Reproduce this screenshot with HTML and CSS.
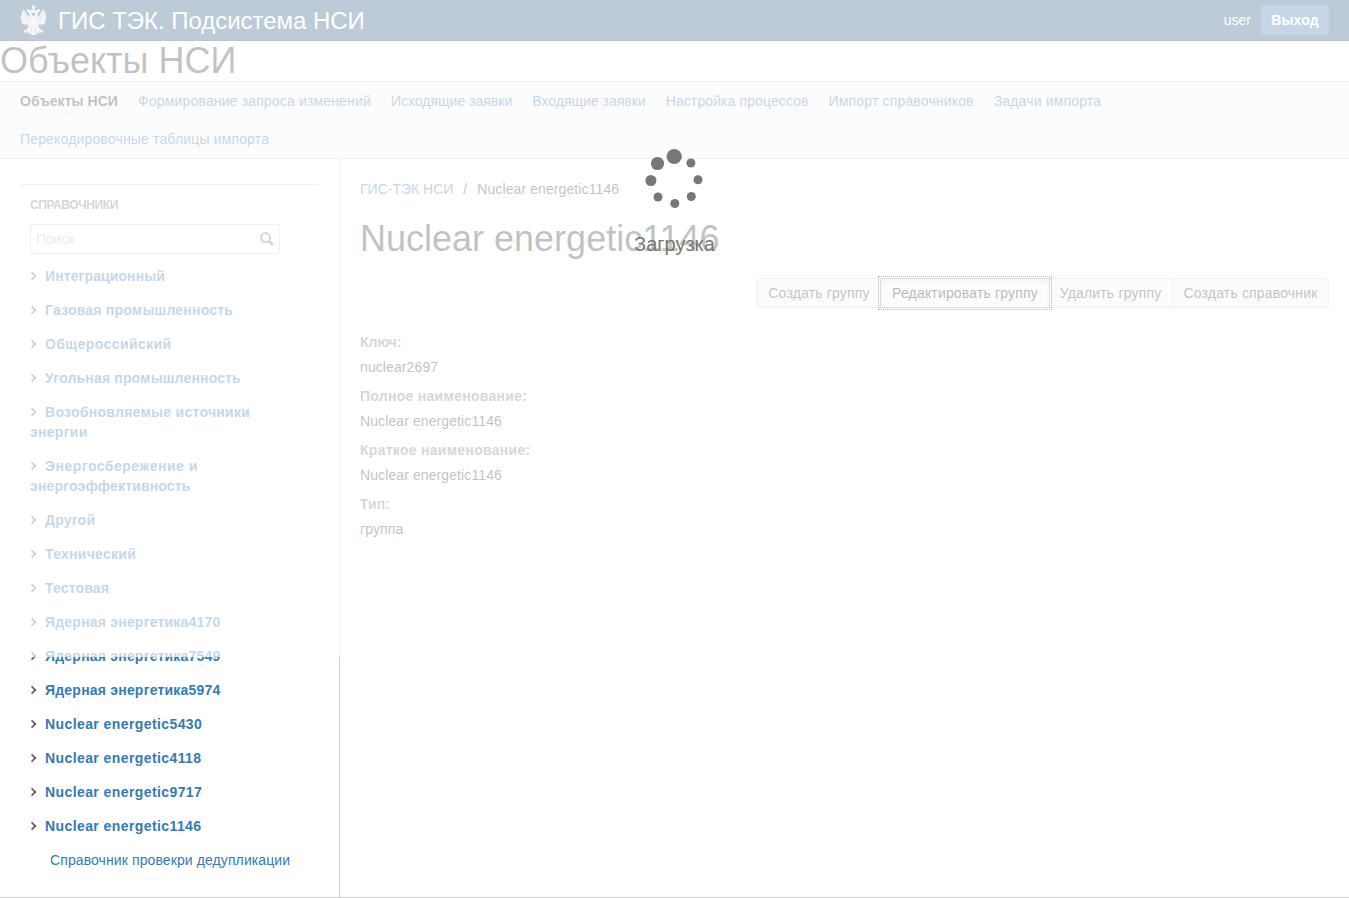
FILE: index.html
```html
<!DOCTYPE html>
<html lang="ru">
<head>
<meta charset="utf-8">
<title>ГИС ТЭК. Подсистема НСИ</title>
<link rel="stylesheet" href="styles.css">
</head>
<body>
<div class="page">
  <header class="topbar">
    <svg class="emblem" viewBox="0 0 26 30" fill="#e4e4e4">
      <path d="M12 0h2v2h1v1h-1v2h2l-1 3h-4l-1-3h2V3h-1V2h1z"/>
      <path d="M7 4l3 1 1 3 1 3h2l1-3 1-3 3-1 1 2-2 1-1 3 1 2 3-5 2-3 1 3 1 1v3l1 2-1 3-1 3-3 1-2-1-1 2 2 3 2 1 1 2-2 1-2-2-1 3-2-1-1 2-2 1-2-1-1-2-2 1-1-3-2 2-2-1 1-2 2-1 2-3-1-2-2 1-3-1-1-3-1-3 1-2V8l1-1 1-3 2 3 3 5 1-2-1-3-2-1z"/>
      <path d="M3 7l5 8M2 10l6 6M1 14l6 3M23 7l-5 8M24 10l-6 6M25 14l-6 3M9 22l-4 4M17 22l4 4M11 22v6M15 22v6M10 10v3M16 10v3M8 18l-4 2M18 18l4 2" stroke="#8298ae" stroke-width=".7" fill="none"/>
      <path d="M10.500 14h5v5l-2.500 2-2.500-2z" fill="#f4f4f4" stroke="#8c9dae" stroke-width=".6"/>
    </svg>
    <span class="brand">ГИС ТЭК. Подсистема НСИ</span>
    <span class="user">user</span>
    <a class="logout">Выход</a>
  </header>
  <h1 class="title">Объекты НСИ</h1>
  <nav class="nav">
    <a class="active">Объекты НСИ</a>
    <a class="wide-s">Формирование запроса изменений</a>
    <a>Исходящие заявки</a>
    <a>Входящие заявки</a>
    <a class="wide-xs">Настройка процессов</a>
    <a class="wide-s">Импорт справочников</a>
    <a class="wide-s">Задачи импорта</a>
    <a class="wide-s">Перекодировочные таблицы импорта</a>
  </nav>
  <div class="columns">
    <aside class="sidebar">
      <div class="side-title">СПРАВОЧНИКИ</div>
      <div class="search"><span>Поиск</span>
        <svg width="14" height="14" viewBox="0 0 14 14" fill="none" stroke="#777" stroke-width="2"><circle cx="5.600" cy="5.600" r="4.500"/><path d="M9 9l4 4" stroke-width="2.600"/></svg>
      </div>
      <ul class="tree">
        <li><i></i><a class="wide-xs">Интеграционный</a></li>
        <li><i></i><a class="wide-m">Газовая промышленность</a></li>
        <li><i></i><a class="wide-l">Общероссийский</a></li>
        <li><i></i><a class="wide-s">Угольная промышленность</a></li>
        <li><i></i><a class="wide-ml">Возобновляемые источники<br>энергии</a></li>
        <li><i></i><a class="wide-xl">Энергосбережение и</a><br><a class="wide-s">энергоэффективность</a></li>
        <li><i></i><a class="wide-m">Другой</a></li>
        <li><i></i><a class="wide-ml">Технический</a></li>
        <li><i></i><a class="wide-s">Тестовая</a></li>
        <li><i></i><a class="wide-m">Ядерная энергетика4170</a></li>
        <li><i></i><a class="wide-m">Ядерная энергетика7549</a></li>
        <li><i></i><a class="wide-m">Ядерная энергетика5974</a></li>
        <li><i></i><a class="wide-l">Nuclear energetic5430</a></li>
        <li><i></i><a class="wide-l">Nuclear energetic4118</a></li>
        <li><i></i><a class="wide-l">Nuclear energetic9717</a></li>
        <li><i></i><a class="wide-l">Nuclear energetic1146</a></li>
        <li class="leaf"><a class="wide-xs">Справочник провекри дедупликации</a></li>
      </ul>
    </aside>
    <main class="content">
      <div class="crumbs"><a>ГИС-ТЭК НСИ</a><span class="sep">/</span><span class="wide-xs">Nuclear energetic1146</span></div>
      <h1 class="name">Nuclear energetic1146</h1>
      <div class="buttons">
        <span class="btn create">Создать группу</span><span class="btn edit">Редактировать группу</span><span class="btn remove">Удалить группу</span><span class="btn catalog">Создать справочник</span>
      </div>
      <dl>
        <dt>Ключ:</dt><dd>nuclear2697</dd>
        <dt class="wide-ml">Полное наименование:</dt><dd>Nuclear energetic1146</dd>
        <dt class="wide-ml">Краткое наименование:</dt><dd>Nuclear energetic1146</dd>
        <dt>Тип:</dt><dd>группа</dd>
      </dl>
    </main>
  </div>
</div>
<div class="overlay">
  <svg width="60" height="62" viewBox="644.500 147 60 62" fill="#777">
    <circle cx="673.700" cy="156.500" r="7.600"/><circle cx="657" cy="163.500" r="6.600"/><circle cx="650.400" cy="180.500" r="5.500"/><circle cx="657.500" cy="197" r="4.500"/><circle cx="674.300" cy="203.500" r="4.500"/><circle cx="690.800" cy="196.500" r="4.500"/><circle cx="697.500" cy="179.700" r="4.500"/><circle cx="690.400" cy="163" r="4.500"/>
  </svg>
  <div class="loading">Загрузка</div>
</div>
</body>
</html>
```
FILE: styles.css
```css
* { box-sizing: border-box; }
body { margin: 0; font: 14px/20px "Liberation Sans", Arial, sans-serif; color: #333; background: #fff; }
.page { height: 898px; overflow: hidden; display: flex; flex-direction: column; border-bottom: 1px solid #ccc; }
a { color: #337ab7; text-decoration: none; }
.wide-xs { letter-spacing: .1px; }
.wide-s { letter-spacing: .16px; }
.wide-m { letter-spacing: .21px; }
.wide-ml { letter-spacing: .28px; }
.wide-l { letter-spacing: .41px; }
.wide-xl { letter-spacing: .5px; }
.topbar { height: 41px; flex: none; display: flex; align-items: center; padding: 0 20px; background: #234e7d; border-bottom: 1px solid #1c3f6b; color: #fff; }
.emblem { width: 27px; height: 30px; margin-right: 11px; }
.brand { font-size: 24px; line-height: 40px; padding-top: 1px; flex: 1; white-space: nowrap; letter-spacing: -.03px; }
.user { margin-right: 10px; }
.logout { width: 68px; height: 30px; line-height: 30px; border-radius: 3px; background: #3a73b2; color: #fff; font-weight: bold; text-align: center; letter-spacing: .15px; }
h1 { font-size: 36px; font-weight: normal; line-height: 40px; margin: 0; white-space: nowrap; }
.title { height: 40px; flex: none; }
.nav { height: 78px; flex: none; display: flex; flex-wrap: wrap; column-gap: 20px; align-content: flex-start; padding: 0 200px 0 20px; background: #f5f5f5; border: solid #ccc; border-width: 1px 0; }
.nav a { line-height: 38px; height: 38px; white-space: nowrap; }
.nav .active { position: relative; color: #333; font-weight: bold; letter-spacing: .06px; }
.nav .active::after { content: ""; position: absolute; left: 43px; top: 33px; width: 11px; height: 11px; background: #fff; border: solid #ccc; border-width: 1px 0 0 1px; transform: rotate(45deg); clip-path: polygon(0 0, 100% 0, 0 100%); }
.columns { flex: 1; display: flex; min-height: 0; }
.sidebar { width: 340px; flex: none; border-right: 1px solid #ccc; padding: 25px 20px 0; }
.side-title { border-top: 1px solid #ccc; padding: 10px 10px 0; height: 40px; font-size: 12px; font-weight: bold; color: #777; letter-spacing: -.4px; }
.search { margin-left: 10px; width: 250px; height: 30px; border: 1px solid #ccc; border-radius: 3px; padding: 0 5px; display: flex; align-items: center; justify-content: space-between; color: #bbb; }
.tree { list-style: none; margin: 5px 0 0 10px; padding: 0; }
.tree li { padding: 7px 0; font-weight: bold; white-space: nowrap; }
.tree i { display: inline-block; width: 6px; height: 6px; border: solid #333; border-width: 1.500px 1.500px 0 0; transform: rotate(45deg); margin: 0 10px 2px -1px; border-width: 1px 1px 0 0; box-shadow: inset -.5px .5px #333; }
.tree .leaf { font-weight: normal; padding-left: 20px; }
.content { flex: 1; padding: 20px 20px 0; }
.sep { margin: 0 10px; }
.name { margin-top: 20px; }
.buttons { display: flex; justify-content: flex-end; margin-top: 19px; letter-spacing: .17px; }
.btn { height: 30px; line-height: 28px; border: 1px solid #ccc; background: #f5f5f5; text-align: center; white-space: nowrap; }
.btn + .btn { margin-left: -1px; }
.create { width: 124px; border-radius: 3px 0 0 3px; }
.edit { position: relative; z-index: 1; width: 170px; margin-right: -1px; color: #111; border-color: #8c8c8c; box-shadow: inset 0 3px 5px rgba(0,0,0,.12); outline: 1px dotted #111; outline-offset: 1px; }
.remove { width: 125px; }
.catalog { width: 157px; border-radius: 0 3px 3px 0; }
dl { margin: 22px 0 0; }
dt { font-weight: bold; line-height: 24px; color: #777; }
dd { margin: 0 0 4px; line-height: 26px; letter-spacing: .1px; }
.overlay { position: absolute; z-index: 10; left: 0; top: 0; width: 100%; height: 657px; padding-top: 147px; background: rgba(255,255,255,.7); display: flex; flex-direction: column; align-items: center; }
.loading { margin-top: 25px; font-size: 20px; color: #777; }
```
